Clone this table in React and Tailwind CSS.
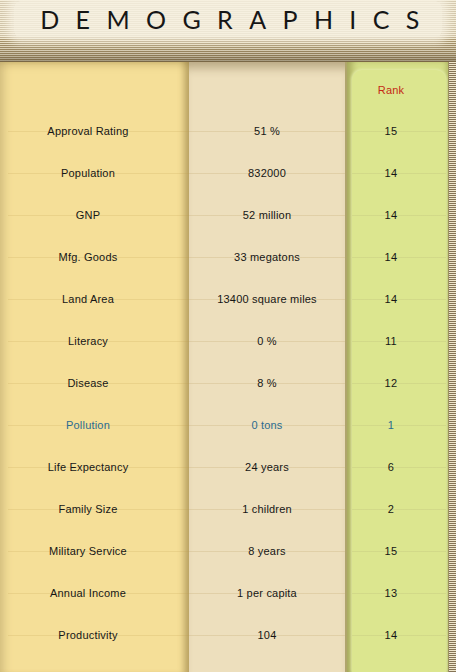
import React from "react";

const rows = [
  ["Approval Rating", "51 %", "15"],
  ["Population", "832000", "14"],
  ["GNP", "52 million", "14"],
  ["Mfg. Goods", "33 megatons", "14"],
  ["Land Area", "13400 square miles", "14"],
  ["Literacy", "0 %", "11"],
  ["Disease", "8 %", "12"],
  ["Pollution", "0 tons", "1", true],
  ["Life Expectancy", "24 years", "6"],
  ["Family Size", "1 children", "2"],
  ["Military Service", "8 years", "15"],
  ["Annual Income", "1 per capita", "13"],
  ["Productivity", "104", "14"],
];

const font = { fontFamily: '"Liberation Sans", Arial, sans-serif' };

export default function App() {
  return (
    <div className="w-[456px] h-[672px] overflow-hidden flex flex-col bg-[#f5df99]" style={font}>
      {/* Header */}
      <div className="h-[62px] shrink-0 bg-[linear-gradient(to_bottom,rgba(250,245,230,0.55)_0px,rgba(250,245,230,0.45)_36px,rgba(80,60,30,0)_40px,rgba(60,45,20,0.2)_54px,rgba(60,45,20,0.45)_62px),repeating-linear-gradient(to_bottom,#efe6cc_0px,#efe6cc_1px,#a8946c_1px,#a8946c_2px)] pt-[1px]">
        <div className="mx-[14px] h-[36px] rounded-[6px] bg-[rgba(246,241,226,0.78)] shadow-[0_0_8px_6px_rgba(246,241,226,0.7)] flex items-center justify-center">
          <span
            className="text-[25px] leading-none text-[#161616] tracking-[16.4px] pl-[20px]"
            style={{ fontFamily: 'Lato, "Open Sans", sans-serif', fontWeight: 400 }}
          >
            DEMOGRAPHICS
          </span>
        </div>
      </div>

      {/* Body */}
      <div className="flex flex-1 min-h-0">
        {/* Left column */}
        <div className="w-[189px] shrink-0 bg-[#f5df98] shadow-[inset_12px_0_8px_-8px_rgba(190,170,110,0.6),inset_-9px_0_6px_-4px_rgba(120,95,40,0.45),inset_0_8px_8px_-6px_rgba(120,95,40,0.35)] pt-[6px] flex flex-col">
          <div className="h-[42px]" />
          {rows.map(([label, , , blue], i) => (
            <div
              key={i}
              className={`h-[42px] flex items-center justify-center pr-[13px] text-[11px] tracking-[0.2px] bg-[linear-gradient(rgba(185,150,70,0.18),rgba(185,150,70,0.18))] bg-no-repeat bg-[position:8px_21px] bg-[size:100%_1px] ${blue ? "text-[#2a6b90]" : "text-[#161616]"}`}
            >
              {label}
            </div>
          ))}
        </div>

        {/* Middle column */}
        <div className="w-[156px] shrink-0 bg-[#eddfbd] shadow-[inset_0_12px_10px_-6px_rgba(110,90,50,0.4)] pt-[6px] flex flex-col">
          <div className="h-[42px]" />
          {rows.map(([, value, , blue], i) => (
            <div
              key={i}
              className={`h-[42px] flex items-center justify-center text-[11px] tracking-[0.2px] bg-[linear-gradient(rgba(175,145,80,0.2),rgba(175,145,80,0.2))] bg-no-repeat bg-[position:0px_21px] bg-[size:100%_1px] ${blue ? "text-[#2a6b90]" : "text-[#161616]"}`}
            >
              {value}
            </div>
          ))}
        </div>

        {/* Right column */}
        <div className="w-[103px] shrink-0 bg-[#d5de88] border-l-[2px] border-[#b0a56c] shadow-[inset_9px_0_7px_-4px_rgba(110,105,40,0.45),inset_-4px_0_4px_-2px_rgba(120,125,50,0.35)] pt-[8px] pl-[5px] pr-[5px]">
          <div className="h-full rounded-t-[10px] bg-[#dce68f] shadow-[0_0_3px_1px_rgba(230,238,170,0.9)] flex flex-col -mr-[3px]">
            <div className="h-[40px] flex items-center justify-center pr-[16px] text-[11px] tracking-[0.2px] text-[#c42a16]">
              Rank
            </div>
            {rows.map(([, , rank, blue], i) => (
              <div
                key={i}
                className={`h-[42px] flex items-center justify-center pr-[16px] text-[11px] tracking-[0.3px] bg-[linear-gradient(rgba(200,205,130,0.5),rgba(200,205,130,0.5))] bg-no-repeat bg-[position:0px_21px] bg-[size:100%_1px] ${blue ? "text-[#2a6b90]" : "text-[#161616]"}`}
              >
                {rank}
              </div>
            ))}
          </div>
        </div>

        {/* Right strip */}
        <div className="flex-1 border-l border-[#9c9060] bg-[repeating-linear-gradient(to_bottom,#efe6cc_0px,#efe6cc_1px,#857456_1px,#857456_2px)]" />
      </div>
    </div>
  );
}
